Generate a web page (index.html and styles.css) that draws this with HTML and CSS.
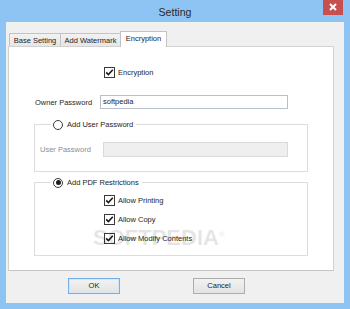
FILE: index.html
```html
<!DOCTYPE html>
<html lang="en">
<head>
    <meta charset="UTF-8">
    <title>Setting</title>
    <link rel="stylesheet" href="styles.css">
</head>
<body>

<div class="window">
    <div class="titlebar">
        <span></span>
        <span class="title">Setting</span>
        <span class="close">
            <svg width="20" height="15" viewBox="0 0 20 15">
                <path d="M7 4 L13 10 M13 4 L7 10" stroke="#fff" stroke-width="2" fill="none"/>
            </svg>
        </span>
    </div>

    <div class="client">
        <div class="tabs">
            <div class="tab" style="width: 51px">Base Setting</div>
            <div class="tab" style="width: 60px">Add Watermark</div>
            <div class="tab active" style="width: 47px">Encryption</div>
        </div>

        <div class="panel">
            <div class="check-row first">
                <span class="box checked"><svg width="11" height="11" viewBox="0 0 11 11"><path d="M2.2 5.4 L4.4 7.6 L8.8 2.8" stroke="#1a1a1a" stroke-width="1.6" fill="none"/></svg></span>
                <span>Encryption</span>
            </div>

            <div class="field-row owner">
                <span class="label">Owner Password</span>
                <span class="input">softpedia</span>
            </div>

            <fieldset class="group">
                <legend><span class="radio"></span>Add User Password</legend>
                <div class="field-row user">
                    <span class="label muted">User Password</span>
                    <span class="input disabled"></span>
                </div>
            </fieldset>

            <fieldset class="group restrictions">
                <legend><span class="radio on"></span>Add PDF Restrictions</legend>
                <div class="check-row">
                    <span class="box checked"><svg width="11" height="11" viewBox="0 0 11 11"><path d="M2.2 5.4 L4.4 7.6 L8.8 2.8" stroke="#1a1a1a" stroke-width="1.6" fill="none"/></svg></span>
                    <span>Allow Printing</span>
                </div>
                <div class="check-row">
                    <span class="box checked"><svg width="11" height="11" viewBox="0 0 11 11"><path d="M2.2 5.4 L4.4 7.6 L8.8 2.8" stroke="#1a1a1a" stroke-width="1.6" fill="none"/></svg></span>
                    <span>Allow Copy</span>
                </div>
                <div class="check-row">
                    <span class="box checked"><svg width="11" height="11" viewBox="0 0 11 11"><path d="M2.2 5.4 L4.4 7.6 L8.8 2.8" stroke="#1a1a1a" stroke-width="1.6" fill="none"/></svg></span>
                    <span>Allow Modify Contents</span>
                </div>
            </fieldset>

            <div class="watermark">SOFTPEDIA<sup>®</sup></div>
        </div>

        <div class="buttons">
            <div class="btn default">OK</div>
            <div class="btn">Cancel</div>
        </div>
    </div>
</div>

</body>
</html>
```

FILE: styles.css
```css
body {
    margin: 0;
    padding: 0;
    font-family: 'Liberation Sans', Arial, sans-serif;
    font-size: 7.5px;
    color: #1e1e1e;
}

.window {
    width: 350px;
    height: 309px;
    background: #8dc4f3;
}

.titlebar {
    height: 22px;
    display: grid;
    grid-template-columns: 1fr auto 1fr;
}

.title {
    font-size: 10.6px;
    color: #2b2b2b;
    line-height: 22px;
    padding-top: 1px;
}

.close {
    justify-self: end;
    margin-right: 7px;
    width: 20px;
    height: 15px;
    background: #c74f50;
}

.close svg {
    display: block;
}

.client {
    height: 281px;
    margin: 0 6px;
    padding: 9px 10px 0 2px;
    box-sizing: border-box;
    background: #f0f0f0;
}

.tabs {
    display: flex;
    align-items: flex-end;
    height: 15px;
    padding-left: 1px;
}

.tab {
    height: 13px;
    box-sizing: border-box;
    border: 1px solid #c3c3c3;
    border-bottom: none;
    border-right: none;
    background: linear-gradient(#f2f2f2, #e6e6e6);
    text-align: center;
    line-height: 13px;
    white-space: nowrap;
}

.tab.active {
    height: 16px;
    margin-bottom: -1px;
    border-right: 1px solid #c3c3c3;
    background: #fff;
    position: relative;
    z-index: 1;
    line-height: 14px;
}

.panel {
    position: relative;
    height: 225px;
    box-sizing: border-box;
    padding-top: 19px;
    background: #fff;
    border: 1px solid #d2d2d2;
    border-bottom-color: #c6c6c6;
}

.check-row {
    display: flex;
    align-items: center;
    gap: 3px;
    height: 13px;
    margin: 6px 0 0 69px;
}

.check-row.first {
    margin: 0 0 0 95px;
}

.box {
    width: 11px;
    height: 11px;
    box-sizing: border-box;
    border: 1px solid #3a3a3a;
    background: #fff;
    position: relative;
}

.box svg {
    position: absolute;
    left: -1px;
    top: -1px;
}

.field-row {
    display: flex;
    align-items: center;
}

.field-row.owner {
    margin: 16px 0 0 26px;
}

.field-row.owner .label {
    width: 65px;
}

.field-row.user {
    margin: 12px 0 0 5px;
}

.field-row.user .label {
    width: 63px;
}

.input {
    height: 14px;
    width: 188px;
    box-sizing: border-box;
    border: 1px solid #b7bfcd;
    padding-left: 2px;
    line-height: 12px;
    background: #fff;
}

.input.disabled {
    width: 185px;
    height: 15px;
    border-color: #dadada;
    background: #efefef;
}

.muted {
    color: #8e8e8e;
}

.group {
    width: 274px;
    box-sizing: border-box;
    margin: 10px 0 0 25px;
    padding: 0 0 14px 0;
    border: 1px solid #dcdcdc;
}

.group.restrictions {
    margin-top: 5px;
    padding-bottom: 10px;
}

.group legend {
    display: flex;
    align-items: center;
    gap: 4px;
    height: 11px;
    padding: 0 3px 0 2px;
    margin-left: 16px;
}

.radio {
    width: 10px;
    height: 10px;
    box-sizing: border-box;
    border: 1px solid #3a3a3a;
    border-radius: 50%;
    background: #fff;
    display: flex;
    align-items: center;
    justify-content: center;
}

.radio.on::after {
    content: "";
    width: 5px;
    height: 5px;
    border-radius: 50%;
    background: #1e1e1e;
}

.watermark {
    position: absolute;
    left: 84px;
    top: 177px;
    font-size: 22px;
    line-height: 22px;
    font-weight: bold;
    color: rgba(0, 0, 0, 0.04);
    text-shadow: 0 0 1px rgba(0, 0, 0, 0.08);
    pointer-events: none;
}

.watermark sup {
    font-size: 8px;
}

.buttons {
    display: flex;
    gap: 73px;
    padding-left: 60px;
    margin-top: 7px;
}

.btn {
    width: 52px;
    height: 16px;
    box-sizing: border-box;
    border: 1px solid #adadad;
    background: linear-gradient(#f2f2f2, #e3e3e3);
    text-align: center;
    line-height: 14px;
}

.btn.default {
    border-color: #74aee6;
    box-shadow: inset 0 0 0 1px #d6e8f8;
}
```
